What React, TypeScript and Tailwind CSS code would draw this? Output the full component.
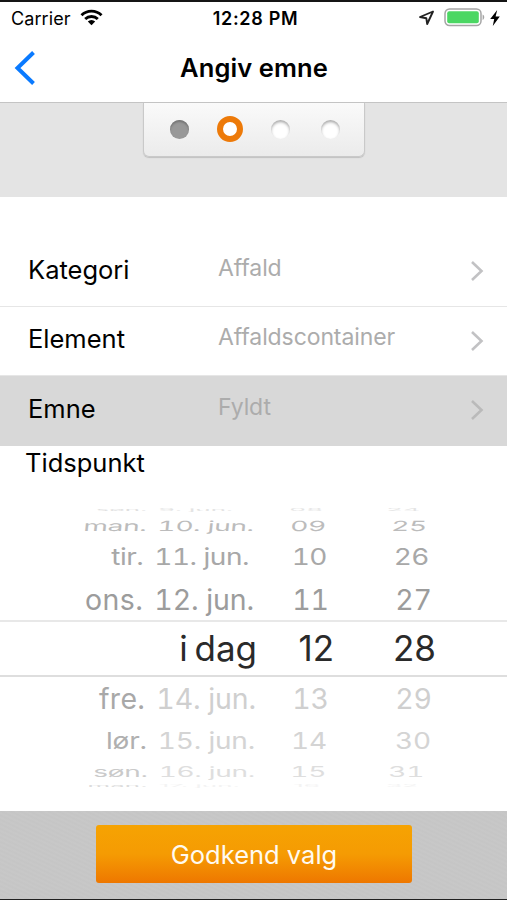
import { clsx } from 'clsx'

interface FormRow {
  label: string
  value: string
  selected?: boolean
}

const formRows: FormRow[] = [
  { label: 'Kategori', value: 'Affald' },
  { label: 'Element', value: 'Affaldscontainer' },
  { label: 'Emne', value: 'Fyldt', selected: true },
]

interface WheelRow {
  day: string
  date: string
  hour: string
  minute: string
  row: string
  text: string
  dayColor: string
  dateColor: string
  dayCell: string
  hourCell: string
  minuteCell: string
}

// Rows flatten out towards the top and bottom edge of the wheel
const wheelRows: WheelRow[] = [
  { day: 'søn.', date: '9. jun.', hour: '08', minute: '24', row: 'h-[7px]', text: 'text-[26px] tabular-nums scale-y-[0.14]', dayColor: 'text-[#e0e0e0]', dateColor: 'text-[#e4e4e4]', dayCell: 'w-[233px]', hourCell: 'w-[90px]', minuteCell: 'w-[97px]' },
  { day: 'man.', date: '10. jun.', hour: '09', minute: '25', row: 'h-6', text: 'text-[28px] tabular-nums tracking-[-0.3px] scale-y-[0.5] -skew-x-3', dayColor: 'text-[#bcbcbc]', dateColor: 'text-[#bcbcbc]', dayCell: 'w-[254px]', hourCell: 'w-[72px]', minuteCell: 'w-[101px]' },
  { day: 'tir.', date: '11. jun.', hour: '10', minute: '26', row: 'h-[38px]', text: 'text-[28px] tabular-nums tracking-[-0.5px] scale-y-[0.82]', dayColor: 'text-[#a8a8a8]', dateColor: 'text-[#a8a8a8]', dayCell: 'w-[249px]', hourCell: 'w-[78px]', minuteCell: 'w-[102px]' },
  { day: 'ons.', date: '12. jun.', hour: '11', minute: '27', row: 'h-11 pt-[5px]', text: 'text-[28.500px] tabular-nums', dayColor: 'tracking-[0.4px] text-[#9c9c9c]', dateColor: 'tracking-[-0.1px] text-[#9c9c9c]', dayCell: 'w-[254px]', hourCell: 'w-[75px]', minuteCell: 'w-[103px]' },
  { day: '', date: 'i dag', hour: '12', minute: '28', row: 'h-[57px] border-y-2 border-t-[#e8e8e8] border-b-[#dedede]', text: 'text-[35px] [word-spacing:-3px]', dayColor: '', dateColor: 'text-[#2a2a2a]', dayCell: 'w-[257px]', hourCell: 'w-[77px]', minuteCell: 'w-[102px]' },
  { day: 'fre.', date: '14. jun.', hour: '13', minute: '29', row: 'h-11 pt-px', text: 'text-[28.500px] tabular-nums', dayColor: 'tracking-[0.3px] text-[#a8a8a8]', dateColor: 'tracking-[-0.1px] text-[#cfcfcf]', dayCell: 'w-[256px]', hourCell: 'w-[73px]', minuteCell: 'w-[103px]' },
  { day: 'lør.', date: '15. jun.', hour: '14', minute: '30', row: 'h-10 pt-px', text: 'text-[28px] tabular-nums tracking-[-0.2px] scale-y-[0.82]', dayColor: 'text-[#b0b0b0]', dateColor: 'text-[#d4d4d4]', dayCell: 'w-[255px]', hourCell: 'w-[72px]', minuteCell: 'w-[104px]' },
  { day: 'søn.', date: '16. jun.', hour: '15', minute: '31', row: 'h-[22px]', text: 'text-[28px] tabular-nums tracking-[-0.3px] scale-y-[0.5]', dayColor: 'text-[#cacaca]', dateColor: 'text-[#dedede]', dayCell: 'w-[255px]', hourCell: 'w-[71px]', minuteCell: 'w-[98px]' },
  { day: 'man.', date: '17. jun.', hour: '16', minute: '32', row: 'h-[7px]', text: 'text-[26px] scale-y-[0.14]', dayColor: 'text-[#dcdcdc]', dateColor: 'text-[#f3f3f3]', dayCell: 'w-[240px]', hourCell: 'w-[80px]', minuteCell: 'w-[98px]' },
]

function StatusBar() {
  return (
    <div className="flex h-[34px] shrink-0 items-center pl-[11px] pr-[7px] text-[18px] leading-[34px]">
      <div className="flex flex-1 items-center gap-[9px]">
        <span className="tracking-[0.1px]">Carrier</span>
        <svg className="-mt-[3px]" width="23" height="17" viewBox="0 0 23 17" fill="none" stroke="#000" strokeWidth="2.9">
          <path d="M1.5 6.2a14.2 14.2 0 0 1 20 0" />
          <path d="M5.2 10a9 9 0 0 1 12.6 0" />
          <path d="M11.5 16.2 7.8 12.5a5.3 5.3 0 0 1 7.4 0z" fill="#000" stroke="none" />
        </svg>
      </div>
      <span className="font-semibold tracking-[0.7px]">12:28 PM</span>
      <div className="flex flex-1 items-center justify-end">
        <svg className="-mt-[2px] mr-[9px]" width="17" height="16" viewBox="0 0 17 16" fill="none" stroke="#222" strokeWidth="1.9" strokeLinejoin="round">
          <path d="M15 1.5 2 7l6.3 1.2L9.2 14z" />
        </svg>
        <svg className="-mt-[3px]" width="42" height="19" viewBox="0 0 42 19" fill="none">
          <rect x="1" y="1" width="36" height="16.5" rx="4.5" stroke="#a5a5a5" strokeWidth="1.5" />
          <rect x="3.2" y="3.2" width="31.6" height="12.1" rx="2" fill="#4bd763" />
          <path d="M38.6 6.6v5.4c2.2-.8 2.2-4.6 0-5.4z" fill="#a5a5a5" />
        </svg>
        <svg className="-mt-[3px] ml-[4px]" width="10" height="16" viewBox="0 0 10 16" fill="#000">
          <path d="M7.2 0 .2 9h4L2.8 16l7-9.400H5.600z" />
        </svg>
      </div>
    </div>
  )
}

function NavBar() {
  return (
    <div className="grid h-[67px] shrink-0 grid-cols-[1fr_auto_1fr] items-center border-b border-[#c4c4c4]">
      <svg className="-mt-0.5 ml-[14px]" width="22" height="34" viewBox="0 0 22 34" fill="none" stroke="#0a7aff" strokeWidth="4">
        <path d="M19.5 1.5 3.5 17l16 15.500" />
      </svg>
      <h1 className="ml-px pb-0.5 text-[25.500px] font-semibold leading-none tracking-[0.1px]">Angiv emne</h1>
    </div>
  )
}

const steps = [
  'size-[19px] bg-[#989898] shadow-[inset_0_2px_2px_#777]',
  'size-[26px] border-[6.500px] border-[#ed7a09] bg-white',
  'size-[19px] bg-white shadow-[inset_0_2px_3px_#aaa]',
  'size-[19px] bg-white shadow-[inset_0_2px_3px_#aaa]',
]

function StepIndicator() {
  return (
    <div className="flex h-[94px] shrink-0 items-start justify-center bg-[#e4e4e4]">
      <div className="ml-px flex h-[54px] w-[222px] items-center justify-center rounded-b-[6px] border border-t-0 border-[#c9c9c9] bg-linear-to-b from-[#fafafa] to-[#ebebeb] pb-px pl-0.5 shadow-[0_1px_1px_#c0c0c0]">
        {steps.map((step, index) => (
          <div key={index} className="flex w-[50.500px] justify-center">
            <div className={clsx('shrink-0 rounded-full', step)} />
          </div>
        ))}
      </div>
    </div>
  )
}

function FormList() {
  return (
    <div className="shrink-0 pt-10">
      {formRows.map(({ label, value, selected }) => (
        <div
          key={label}
          className={clsx(
            'flex h-[69.500px] items-center border-b pl-7 pr-[23px]',
            selected ? 'border-[#d8d8d8] bg-[#d8d8d8]' : 'border-[#e6e6e6]'
          )}
        >
          <span className="w-[190px] pb-[3px] text-[25.500px] leading-8">{label}</span>
          <span className="flex-1 pb-[7px] text-[23px] leading-8 tracking-[-0.1px] text-[#acacac]">{value}</span>
          <svg width="14" height="22" viewBox="0 0 14 22" fill="none" stroke={selected ? '#bababa' : '#c2c2c4'} strokeWidth="2.6">
            <path d="M2 2l9.500 9L2 20" />
          </svg>
        </div>
      ))}
    </div>
  )
}

function DateWheel() {
  return (
    <div className="flex shrink-0 flex-col">
      {wheelRows.map(item => (
        <div key={item.date} className={clsx('flex items-center whitespace-nowrap leading-none', item.row)}>
          <div className={clsx('flex shrink-0 justify-end gap-[11px]', item.dayCell, item.text)}>
            <span className={item.dayColor}>{item.day}</span>
            <span className={item.dateColor}>{item.date}</span>
          </div>
          <div className={clsx('shrink-0 text-right', item.hourCell, item.text, item.dateColor)}>{item.hour}</div>
          <div className={clsx('shrink-0 text-right', item.minuteCell, item.text, item.dateColor)}>{item.minute}</div>
        </div>
      ))}
    </div>
  )
}

export default function App() {
  return (
    <div className="flex h-[900px] w-[507px] flex-col overflow-hidden border-t-2 border-[#151515] bg-white font-['Inter',sans-serif] text-black">
      <StatusBar />
      <NavBar />
      <StepIndicator />
      <FormList />
      <h2 className="h-[61px] shrink-0 pl-[25px] pt-px text-[25.500px] leading-8">Tidspunkt</h2>
      <DateWheel />
      <div className="mt-auto flex h-[89px] shrink-0 items-start justify-center border-b border-[#222] bg-[#c6c6c6] bg-[repeating-linear-gradient(25deg,#c5c5c5_0px,#c8c8c8_2px,#c5c5c5_4px)] pt-[14px]">
        <button className="ml-px h-[58px] w-[316px] rounded-[3px] bg-linear-to-b from-[#f6a302] via-[#f59b03] to-[#ee7700] pt-0.5 text-[25.500px] text-[#fffaf0]">
          Godkend valg
        </button>
      </div>
    </div>
  )
}
